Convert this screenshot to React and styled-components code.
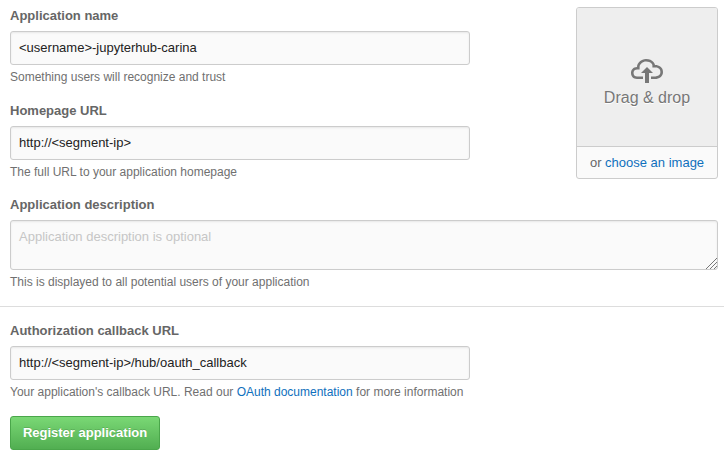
import React from "react";
import styled, { createGlobalStyle } from "styled-components";

const GlobalStyle = createGlobalStyle`
  * { box-sizing: border-box; }
  body {
    margin: 0;
    background: #fff;
    color: #666;
    font-family: "Liberation Sans", Arial, Helvetica, sans-serif;
    font-size: 13px;
  }
`;

const Form = styled.form`
  width: 724px;
  height: 457px;
  overflow: hidden;
`;

const Section = styled.section`
  display: grid;
  grid-template-columns: 460px 142px;
  justify-content: space-between;
  padding: 7px 6px 0 10px;
`;

const Column = styled.div`
  display: flex;
  flex-direction: column;
`;

const Field = styled.div`
  display: flex;
  flex-direction: column;
  grid-column: ${(p) => (p.$wide ? "1 / -1" : "auto")};
  height: ${(p) => p.$height}px;
`;

const Label = styled.label`
  height: 24px;
  line-height: 18px;
  font-weight: bold;
  color: #666;
`;

const controlStyles = `
  display: block;
  width: 100%;
  margin: 0;
  border: 1px solid #ccc;
  border-radius: 3px;
  background: #fafafa;
  box-shadow: inset 0 1px 2px rgba(0, 0, 0, 0.075);
  color: #222;
  font: 13px "Liberation Sans", Arial, sans-serif;
  outline: none;
`;

const Input = styled.input`
  ${controlStyles}
  height: 34px;
  padding: 6px 8px 7px;
`;

const AreaWrap = styled.div`
  position: relative;
  height: 50px;
`;

const TextArea = styled.textarea`
  ${controlStyles}
  height: 50px;
  padding: 8px;
  line-height: 16px;
  resize: none;
  &::placeholder { color: #c6c6c6; opacity: 1; }
`;

const Grip = styled.svg`
  position: absolute;
  right: 1px;
  bottom: 1px;
`;

const Hint = styled.p`
  margin: 4px 0 0;
  height: 16px;
  line-height: 16px;
  font-size: 12px;
  color: #707070;
  white-space: nowrap;
`;

const Link = styled.a`
  color: #0f70bd;
  text-decoration: none;
`;

const Uploader = styled.div`
  display: flex;
  flex-direction: column;
  height: 172px;
  border: 1px solid #ccc;
  border-radius: 3px;
  background: #fafafa;
  overflow: hidden;
`;

const DropZone = styled.div`
  display: flex;
  flex: none;
  flex-direction: column;
  align-items: center;
  height: 139px;
  padding-top: 47px;
  border-bottom: 1px solid #ccc;
  background: #eee;
  color: #777;
`;

const DropText = styled.span`
  height: 20px;
  margin-top: 1px;
  line-height: 20px;
  font-size: 16px;
  text-shadow: 0 1px 0 #fff;
`;

const Choose = styled.div`
  height: 31px;
  line-height: 32px;
  text-align: center;
`;

const Divider = styled.hr`
  height: 1px;
  margin: 0;
  border: 0;
  background: #ddd;
`;

const Callback = styled.section`
  width: 470px;
  padding: 15px 0 0 10px;
`;

const Submit = styled.button`
  display: block;
  width: 150px;
  height: 34px;
  padding: 0 0 1px;
  border: 1px solid #4aa64a;
  border-radius: 3px;
  background: linear-gradient(#7bd976, #50ad50);
  background-origin: border-box;
  color: #fff;
  font: bold 13px "Liberation Sans", Arial, sans-serif;
  text-shadow: 0 -1px 0 rgba(0, 0, 0, 0.15);
`;

const CloudIcon = () => (
  <svg width="32" height="32" viewBox="0 0 16 16" fill="#777" aria-hidden="true">
    <path d="M7 9H5l3-3 3 3H9v5H7V9zm5-4c0-.44-.91-3-4.5-3C5.08 2 3 3.92 3 6 1.02 6 0 7.52 0 9c0 1.53 1 3 3 3h3v-1.3H3c-1.62 0-1.7-1.42-1.7-1.7 0-.17.05-1.7 1.7-1.7h1.3V6c0-1.39 1.56-2.7 3.2-2.7 2.55 0 3.13 1.55 3.2 1.8v1.2H12c.81 0 2.7.22 2.7 2.2 0 2.09-2.25 2.2-2.7 2.2h-2V12h2c2.08 0 4-1.16 4-3.5C16 6.06 14.08 5 12 5z" />
  </svg>
);

export default function App() {
  return (
    <>
      <GlobalStyle />
      <Form>
        <Section>
          <Column>
            <Field $height={95}>
              <Label htmlFor="name">Application name</Label>
              <Input id="name" defaultValue="<username>-jupyterhub-carina" />
              <Hint>Something users will recognize and trust</Hint>
            </Field>
            <Field $height={94}>
              <Label htmlFor="home">Homepage URL</Label>
              <Input id="home" defaultValue="http://<segment-ip>" />
              <Hint>The full URL to your application homepage</Hint>
            </Field>
          </Column>
          <Uploader>
            <DropZone>
              <CloudIcon />
              <DropText>Drag &amp; drop</DropText>
            </DropZone>
            <Choose>
              or <Link>choose an image</Link>
            </Choose>
          </Uploader>
          <Field $wide $height={110}>
            <Label htmlFor="description">Application description</Label>
            <AreaWrap>
              <TextArea id="description" placeholder="Application description is optional" />
              <Grip width="12" height="12" viewBox="0 0 12 12" stroke="#777" strokeWidth="1" fill="none">
                <path d="M1 12L12 1M5 12L12 5M9 12L12 9" />
              </Grip>
            </AreaWrap>
            <Hint>This is displayed to all potential users of your application</Hint>
          </Field>
        </Section>
        <Divider />
        <Callback>
          <Field $height={94}>
            <Label htmlFor="callback">Authorization callback URL</Label>
            <Input id="callback" defaultValue="http://<segment-ip>/hub/oauth_callback" />
            <Hint>
              Your application's callback URL. Read our <Link>OAuth documentation</Link> for more information
            </Hint>
          </Field>
          <Submit type="button">Register application</Submit>
        </Callback>
      </Form>
    </>
  );
}
